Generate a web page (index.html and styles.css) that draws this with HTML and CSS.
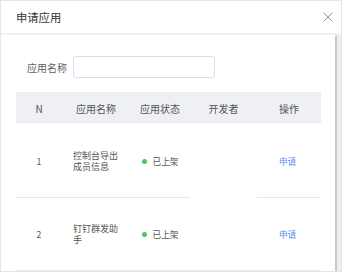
FILE: index.html
```html
<!DOCTYPE html>
<html>
<title>申请应用</title>

<head>
    <link rel="stylesheet" href="styles.css">
</head>

<body>

    <div class="dialog">
        <div class="dialog-header">
            <span class="dialog-title">申请应用</span>
            <span class="close">
                <svg width="10" height="10" viewBox="0 0 10 10">
                    <path d="M0.5 0.5 L9.5 9.5 M9.5 0.5 L0.5 9.5" stroke="#9a9a9a" stroke-width="1" fill="none"/>
                </svg>
            </span>
        </div>

        <div class="dialog-body">
            <div class="content">
                <div class="form-row">
                    <label class="form-label">应用名称</label>
                    <input class="form-input" type="text">
                </div>

                <table class="app-table">
                    <colgroup>
                        <col style="width: 46px">
                        <col style="width: 68px">
                        <col style="width: 60px">
                        <col style="width: 67px">
                        <col style="width: 64px">
                    </colgroup>
                    <thead>
                        <tr>
                            <th>N</th>
                            <th>应用名称</th>
                            <th>应用状态</th>
                            <th>开发者</th>
                            <th>操作</th>
                        </tr>
                    </thead>
                    <tbody>
                        <tr class="first">
                            <td>1</td>
                            <td><span class="app-name">控制台导出成员信息</span></td>
                            <td><span class="dot"></span>已上架</td>
                            <td class="no-line"></td>
                            <td><a class="apply">申请</a></td>
                        </tr>
                        <tr>
                            <td>2</td>
                            <td><span class="app-name">钉钉群发助手</span></td>
                            <td><span class="dot"></span>已上架</td>
                            <td></td>
                            <td><a class="apply">申请</a></td>
                        </tr>
                    </tbody>
                </table>
            </div>

            <!-- fake scrollbar -->
            <div class="scrollbar"></div>
        </div>
    </div>

</body>

</html>
```

FILE: styles.css
```css
* {
    box-sizing: border-box;
}

body {
    margin: 0;
    background-color: #fff;
    font-family: "Noto Sans CJK SC", "Noto Sans", sans-serif;
    color: #555;
}

.dialog {
    width: 342px;
    height: 272px;
    border: 1px solid #e6e6e6;
    overflow: hidden;
    display: flex;
    flex-direction: column;
}

.dialog-header {
    height: 32px;
    flex: none;
    display: flex;
    align-items: center;
    justify-content: space-between;
    padding: 0 8px 0 15px;
    border-bottom: 2px solid #f0f0f0;
    box-sizing: content-box;
}

.dialog-title {
    font-size: 11.3px;
    color: #333;
}

.close {
    display: flex;
    margin-top: -1px;
}

.dialog-body {
    flex: 1;
    display: flex;
    min-height: 0;
}

.content {
    flex: 1;
    padding: 21px 14px 0 15px;
}

.scrollbar {
    width: 6px;
    background-color: #eeeeee;
    border-left: 2px solid #c8c8c8;
    border-top-left-radius: 2px;
}

/* form */

.form-row {
    display: flex;
    align-items: center;
}

.form-label {
    width: 51px;
    margin-right: 6px;
    text-align: right;
    font-size: 10px;
    color: #606266;
}

.form-input {
    width: 142px;
    height: 22px;
    border: 1px solid #dcdfe6;
    border-radius: 3px;
    outline: none;
}

/* table */

.app-table {
    margin-top: 14px;
    width: 305px;
    table-layout: fixed;
    border-collapse: separate;
    border-spacing: 0;
}

.app-table th {
    height: 31px;
    background-color: #eef0f3;
    border-bottom: 1px solid #e6e8eb;
    font-size: 10px;
    font-weight: normal;
    color: #555;
    text-align: center;
    padding: 3px 0 0 0;
}

.app-table td {
    height: 73px;
    border-bottom: 1px solid #e8e8e8;
    font-size: 8.6px;
    color: #555;
    text-align: center;
    vertical-align: middle;
    padding: 0;
}

.app-table tr.first td {
    height: 75px;
    padding-top: 2px;
}

.app-table td.no-line {
    border-bottom-color: transparent;
}

.app-name {
    display: inline-block;
    width: 46px;
    text-align: left;
    font-size: 9px;
    line-height: 11px;
}

.dot {
    display: inline-block;
    width: 5px;
    height: 5px;
    border-radius: 50%;
    background-color: #4cc55c;
    margin-right: 6px;
    vertical-align: 1px;
}

.apply {
    color: #5b8cf5;
    margin-right: 3px;
    cursor: pointer;
}
```
